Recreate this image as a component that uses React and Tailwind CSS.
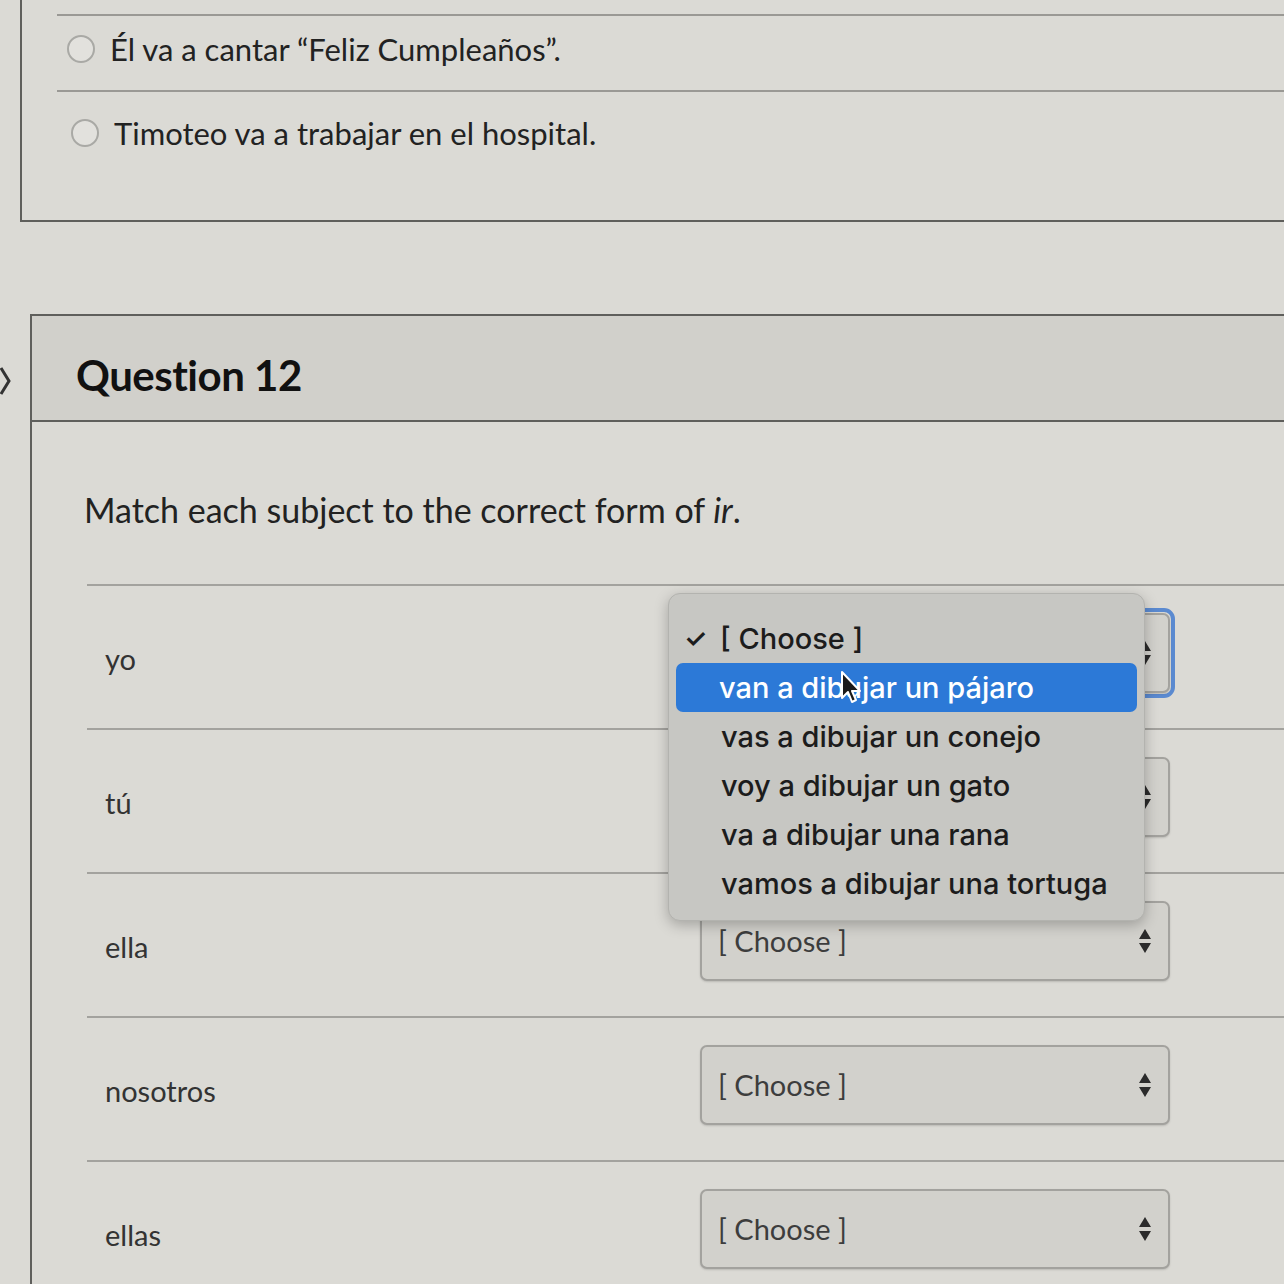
import React from 'react';

const rows = [
  { label: 'yo', focused: true },
  { label: 'tú' },
  { label: 'ella' },
  { label: 'nosotros' },
  { label: 'ellas' },
];

const menuItems = [
  'van a dibujar un pájaro',
  'vas a dibujar un conejo',
  'voy a dibujar un gato',
  'va a dibujar una rana',
  'vamos a dibujar una tortuga',
];

function Arrows() {
  return (
    <svg width="14" height="26" viewBox="0 0 14 26" className="shrink-0">
      <path d="M7 1 L13 11 L1 11 Z" fill="#2b2b2b" />
      <path d="M7 25 L13 15 L1 15 Z" fill="#2b2b2b" />
    </svg>
  );
}

function Select({ focused }) {
  const box = (
    <div className="h-[80px] w-[470px] rounded-[7px] border-2 border-[#a3a29e] bg-[#d2d1cc] shadow-[0_1px_2px_rgba(0,0,0,0.15)] flex items-center justify-between pl-[16px] pr-[16px]">
      <span className="text-[29px] text-[#3d3d3d]">[ Choose ]</span>
      <Arrows />
    </div>
  );
  if (!focused) return box;
  return <div className="rounded-[11px] border-[4px] border-[#5b8ad0] p-[1px] -m-[5px]">{box}</div>;
}

function Radio() {
  return <span className="w-[28px] h-[28px] rounded-full border-2 border-[#a9a9a5] bg-[#e2e1dd] shrink-0" />;
}

function Cursor() {
  return (
    <svg width="24" height="36" viewBox="0 0 24 36" className="absolute left-[840px] top-[670px]">
      <path d="M2 2 L2 28 L8 22 L12 32 L16 30 L12 21 L20 21 Z" fill="#1a1a1a" stroke="#ffffff" strokeWidth="2" strokeLinejoin="round" />
    </svg>
  );
}

export default function App() {
  return (
    <div className="relative w-[1284px] h-[1284px] overflow-hidden bg-[#dbdad5] text-[#222] font-['Lato','Open_Sans',sans-serif]">
      {/* previous question card */}
      <div className="ml-[20px] h-[222px] border-l-2 border-b-2 border-[#5f5f5c]">
        <div className="pl-[35px] pt-[14px]">
          <div className="border-t-2 border-[#9a9995] h-[76px] flex items-center gap-[15px] pl-[10px] pb-[8px]">
            <Radio />
            <span className="text-[31px]">Él va a cantar “Feliz Cumpleaños”.</span>
          </div>
          <div className="border-t-2 border-[#9a9995] h-[84px] flex items-center gap-[15px] pl-[14px]">
            <Radio />
            <span className="text-[31px]">Timoteo va a trabajar en el hospital.</span>
          </div>
        </div>
      </div>

      {/* question 12 */}
      <div className="mt-[92px] ml-[30px] border-t-2 border-l-2 border-[#5f5f5c] relative">
        <svg width="14" height="30" viewBox="0 0 14 30" className="absolute -left-[33px] top-[50px]">
          <path d="M2 2 L10 15 L2 28" fill="none" stroke="#333" strokeWidth="3" />
        </svg>
        <div className="h-[106px] bg-[#d1d0cb] border-b-2 border-[#5f5f5c] flex items-center pl-[44px] pt-[14px]">
          <h2 className="text-[42px] font-bold text-[#111] tracking-[-0.5px]">Question 12</h2>
        </div>
        <div className="pl-[52px] pt-[66px]">
          <p className="text-[34px] leading-[44px]">
            Match each subject to the correct form of <i>ir</i>.
          </p>
          <div className="mt-[52px] pl-[3px]">
            {rows.map((r) => (
              <div key={r.label} className="border-t-2 border-[#a3a29e] h-[144px] flex items-center pb-[8px]">
                <span className="w-[613px] pl-[18px] pt-[12px] text-[29px] text-[#333]">{r.label}</span>
                <Select focused={r.focused} />
              </div>
            ))}
          </div>
        </div>
      </div>

      {/* open dropdown menu */}
      <div className="absolute left-[668px] top-[593px] w-[477px] rounded-[12px] bg-[#c7c7c3] border border-[#b3b3af] shadow-[0_4px_14px_rgba(0,0,0,0.25)] pt-[20px] pb-[12px] px-[7px] font-['Inter','Roboto',sans-serif] text-[#1c1c1c]">
        <div className="h-[49px] flex items-center pl-[8px]">
          <span className="w-[36px] text-[26px] font-semibold">✓</span>
          <span className="text-[29px] font-medium">[ Choose ]</span>
        </div>
        {menuItems.map((t, i) => (
          <div
            key={t}
            className={
              i === 0
                ? 'h-[49px] flex items-center pl-[43px] rounded-[7px] bg-[#2c79d7] text-white'
                : 'h-[49px] flex items-center pl-[45px]'
            }
          >
            <span className="text-[29px] font-medium">{t}</span>
          </div>
        ))}
      </div>

      <Cursor />
    </div>
  );
}
